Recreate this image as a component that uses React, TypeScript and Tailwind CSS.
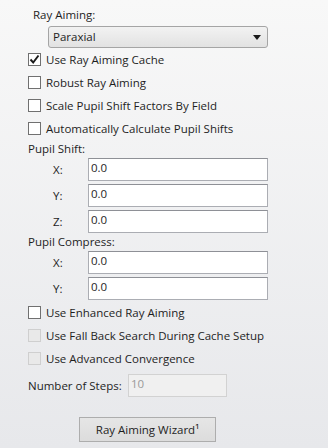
import React from "react";

const font = { fontFamily: '"Open Sans", "Noto Sans", sans-serif' };

function CheckBox({ label, checked = false, disabled = false }: { label: string; checked?: boolean; disabled?: boolean }) {
    return (
        <div className="flex items-center h-[23px] pl-[28px]">
            <div
                className={
                    "w-[13px] h-[13px] border flex items-center justify-center " +
                    (disabled ? "border-[#cfcfcf] bg-[#e9e9e9]" : "border-[#707070] bg-white")
                }
            >
                {checked && (
                    <svg width="11" height="11" viewBox="0 0 11 11">
                        <path d="M1.5 5.5 L4.2 8.5 L9.5 1.5" fill="none" stroke="#1a1a1a" strokeWidth="1.9" />
                    </svg>
                )}
            </div>
            <span className="ml-[5px] text-[11.5px] text-[#1e1e1e]">{label}</span>
        </div>
    );
}

function FieldRow({ label, value }: { label: string; value: string }) {
    return (
        <div className="flex items-center h-[23px] mt-[3px] first:mt-[1px]">
            <span className="w-[88px] pl-[53px] text-[11.5px] text-[#1e1e1e]">{label}</span>
            <div className="w-[180px] h-[23px] bg-white border border-[#abadb3] border-t-[#8e9096] pl-[2px] text-[11.5px] leading-[17px] text-[#1e1e1e]">
                {value}
            </div>
        </div>
    );
}

export default function App() {
    return (
        <div
            className="w-[328px] h-[448px] bg-gradient-to-b from-[#f8f8f8] to-[#e7e8eb] pt-[6px] flex flex-col select-none"
            style={font}
        >
            <div className="h-[18px] leading-[18px] pl-[33px] text-[11.5px] text-[#1e1e1e]">Ray Aiming:</div>
            <div className="mt-[2px] ml-[48px] w-[220px] h-[22px] rounded-[3px] border border-[#a5a5a5] bg-gradient-to-b from-[#f2f2f2] to-[#e2e2e2] flex items-center justify-between pl-[4px] pr-[6px]">
                <span className="text-[11.5px] text-[#1e1e1e]">Paraxial</span>
                <svg width="8" height="5" viewBox="0 0 8 5">
                    <path d="M0 0 H8 L4 5 Z" fill="#1a1a1a" />
                </svg>
            </div>
            <CheckBox label="Use Ray Aiming Cache" checked />
            <CheckBox label="Robust Ray Aiming" />
            <CheckBox label="Scale Pupil Shift Factors By Field" />
            <CheckBox label="Automatically Calculate Pupil Shifts" />

            <div className="h-[17px] leading-[17px] pl-[28px] text-[11.5px] text-[#1e1e1e]">Pupil Shift:</div>
            <div className="flex flex-col">
                <FieldRow label="X:" value="0.0" />
                <FieldRow label="Y:" value="0.0" />
                <FieldRow label="Z:" value="0.0" />
            </div>

            <div className="h-[17px] leading-[17px] pl-[28px] text-[11.5px] text-[#1e1e1e]">Pupil Compress:</div>
            <div className="flex flex-col">
                <FieldRow label="X:" value="0.0" />
                <FieldRow label="Y:" value="0.0" />
            </div>

            <div className="h-[1px]" />
            <CheckBox label="Use Enhanced Ray Aiming" />
            <CheckBox label="Use Fall Back Search During Cache Setup" disabled />
            <CheckBox label="Use Advanced Convergence" disabled />

            <div className="mt-[4px] flex items-center h-[23px] pl-[28px]">
                <span className="w-[100px] text-[11.5px] text-[#1e1e1e]">Number of Steps:</span>
                <div className="w-[99px] h-[23px] border border-[#d2d2d2] bg-[#f0f0f0] pl-[2px] text-[11.5px] leading-[17px] text-[#9a9a9a]">
                    10
                </div>
            </div>

            <button className="mt-[20px] ml-[79px] w-[137px] h-[25px] border border-[#adadad] bg-gradient-to-b from-[#e6e6e6] to-[#dcdcdc] text-[11.5px] text-[#1e1e1e]">
                Ray Aiming Wizard¹
            </button>
        </div>
    );
}
